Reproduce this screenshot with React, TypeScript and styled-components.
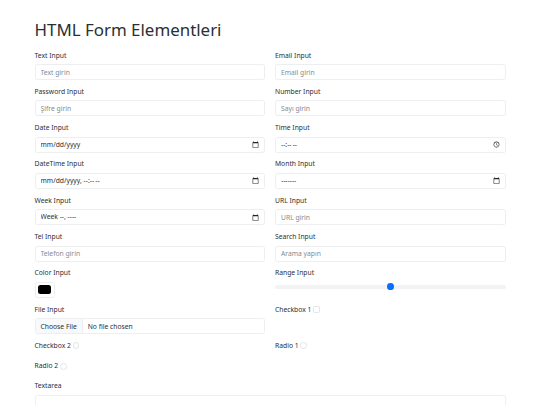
import React from "react";
import styled, { createGlobalStyle, css } from "styled-components";

const GlobalStyle = createGlobalStyle`
  html, body {
    margin: 0;
    padding: 0;
    background: #ffffff;
  }
  body {
    font-family: "Noto Sans", "DejaVu Sans", sans-serif;
    color: #212529;
  }
  *, *::before, *::after {
    box-sizing: border-box;
  }
`;

const Container = styled.div`
  width: 471px;
  margin: 0 auto;
  padding-top: 20.3px;
  font-size: 6.75px;
  line-height: 1.5;
`;

const Title = styled.h1`
  margin: 0 0 10.1px;
  font-size: 16.9px;
  font-weight: 400;
  line-height: 1.2;
  color: #2b2f33;
`;

const FormGrid = styled.form`
  display: grid;
  grid-template-columns: 1fr 1fr;
  column-gap: 10px;
`;

const Field = styled.div<{ $wide?: boolean }>`
  margin-bottom: 6.75px;
  ${(p) =>
    p.$wide &&
    css`
      grid-column: 1 / -1;
    `}
`;

const Label = styled.label`
  display: inline-block;
  margin-bottom: 3.4px;
  font-size: 6.75px;
  line-height: 1.5;
  color: #2b2f33;
`;

const controlBase = css`
  display: block;
  width: 100%;
  height: 16px;
  margin: 0;
  padding: 2.5px 5px;
  font-family: "Noto Sans", "DejaVu Sans", sans-serif;
  font-size: 6.75px;
  line-height: 1.5;
  color: #2b2f33;
  background: #ffffff;
  border: 1px solid #eceef0;
  border-radius: 2.5px;
  outline: none;

  &::placeholder {
    color: #858b91;
  }
`;

const Control = styled.input`
  ${controlBase}

  &::-webkit-calendar-picker-indicator {
    margin: 0;
    padding: 0;
    width: 7px;
    height: 7px;
    opacity: 0.85;
  }
  &::-webkit-datetime-edit,
  &::-webkit-datetime-edit-fields-wrapper,
  &::-webkit-datetime-edit-text,
  &::-webkit-datetime-edit-month-field,
  &::-webkit-datetime-edit-day-field,
  &::-webkit-datetime-edit-year-field,
  &::-webkit-datetime-edit-hour-field,
  &::-webkit-datetime-edit-minute-field,
  &::-webkit-datetime-edit-ampm-field,
  &::-webkit-datetime-edit-week-field {
    padding: 0;
    margin: 0;
  }
`;

const ColorControl = styled.input`
  ${controlBase}
  width: 20.25px;
  padding: 2.5px;
  cursor: pointer;

  &::-webkit-color-swatch-wrapper {
    padding: 0;
  }
  &::-webkit-color-swatch {
    border: 0;
    border-radius: 2.5px;
  }
`;

const FileControl = styled.input`
  ${controlBase}
  overflow: hidden;

  &::file-selector-button {
    height: 14px;
    margin: -2.5px 5px -2.5px -5px;
    padding: 2.5px 5px;
    font-family: inherit;
    font-size: 6.75px;
    line-height: 1.5;
    color: #2b2f33;
    background: #f8f9fa;
    border: 0;
    border-right: 1px solid #eceef0;
    border-radius: 0;
  }
`;

const RangeControl = styled.input`
  display: block;
  width: 100%;
  height: 10.1px;
  margin: 0;
  padding: 0;
  background: transparent;
  appearance: none;
  -webkit-appearance: none;

  &::-webkit-slider-runnable-track {
    height: 3.4px;
    background: #f2f3f5;
    border-radius: 3.4px;
  }
  &::-webkit-slider-thumb {
    -webkit-appearance: none;
    appearance: none;
    width: 6.75px;
    height: 6.75px;
    margin-top: -1.7px;
    background: #0d6efd;
    border: 0;
    border-radius: 50%;
  }
`;

const CheckControl = styled.input<{ $round?: boolean }>`
  appearance: none;
  -webkit-appearance: none;
  display: inline-block;
  width: 6.75px;
  height: 6.75px;
  margin: 1.7px 0 0;
  vertical-align: top;
  background: #ffffff;
  border: 1px solid #e3e5e8;
  border-radius: ${(p) => (p.$round ? "50%" : "1.7px")};
`;

const TextArea = styled.textarea`
  ${controlBase}
  height: 37px;
  resize: vertical;
`;

type InputField = { label: string; type: string; placeholder?: string };

const inputs: InputField[] = [
  { label: "Text Input", type: "text", placeholder: "Text girin" },
  { label: "Email Input", type: "email", placeholder: "Email girin" },
  { label: "Password Input", type: "password", placeholder: "Şifre girin" },
  { label: "Number Input", type: "number", placeholder: "Sayı girin" },
  { label: "Date Input", type: "date" },
  { label: "Time Input", type: "time" },
  { label: "DateTime Input", type: "datetime-local" },
  { label: "Month Input", type: "month" },
  { label: "Week Input", type: "week" },
  { label: "URL Input", type: "url", placeholder: "URL girin" },
  { label: "Tel Input", type: "tel", placeholder: "Telefon girin" },
  { label: "Search Input", type: "search", placeholder: "Arama yapın" },
];

const App = () => {
  return (
    <>
      <GlobalStyle />
      <Container>
        <Title>HTML Form Elementleri</Title>
        <FormGrid>
          {inputs.map((f) => (
            <Field key={f.label}>
              <Label>{f.label}</Label>
              <Control type={f.type} placeholder={f.placeholder} />
            </Field>
          ))}
          <Field>
            <Label>Color Input</Label>
            <ColorControl type="color" defaultValue="#000000" />
          </Field>
          <Field>
            <Label>Range Input</Label>
            <RangeControl type="range" />
          </Field>
          <Field>
            <Label>File Input</Label>
            <FileControl type="file" />
          </Field>
          <Field>
            <Label>Checkbox 1</Label> <CheckControl type="checkbox" />
          </Field>
          <Field>
            <Label>Checkbox 2</Label> <CheckControl type="checkbox" $round />
          </Field>
          <Field>
            <Label>Radio 1</Label> <CheckControl type="radio" name="r" $round />
          </Field>
          <Field>
            <Label>Radio 2</Label> <CheckControl type="radio" name="r" $round />
          </Field>
          <Field $wide>
            <Label>Textarea</Label>
            <TextArea rows={3} />
          </Field>
        </FormGrid>
      </Container>
    </>
  );
};

export default App;
